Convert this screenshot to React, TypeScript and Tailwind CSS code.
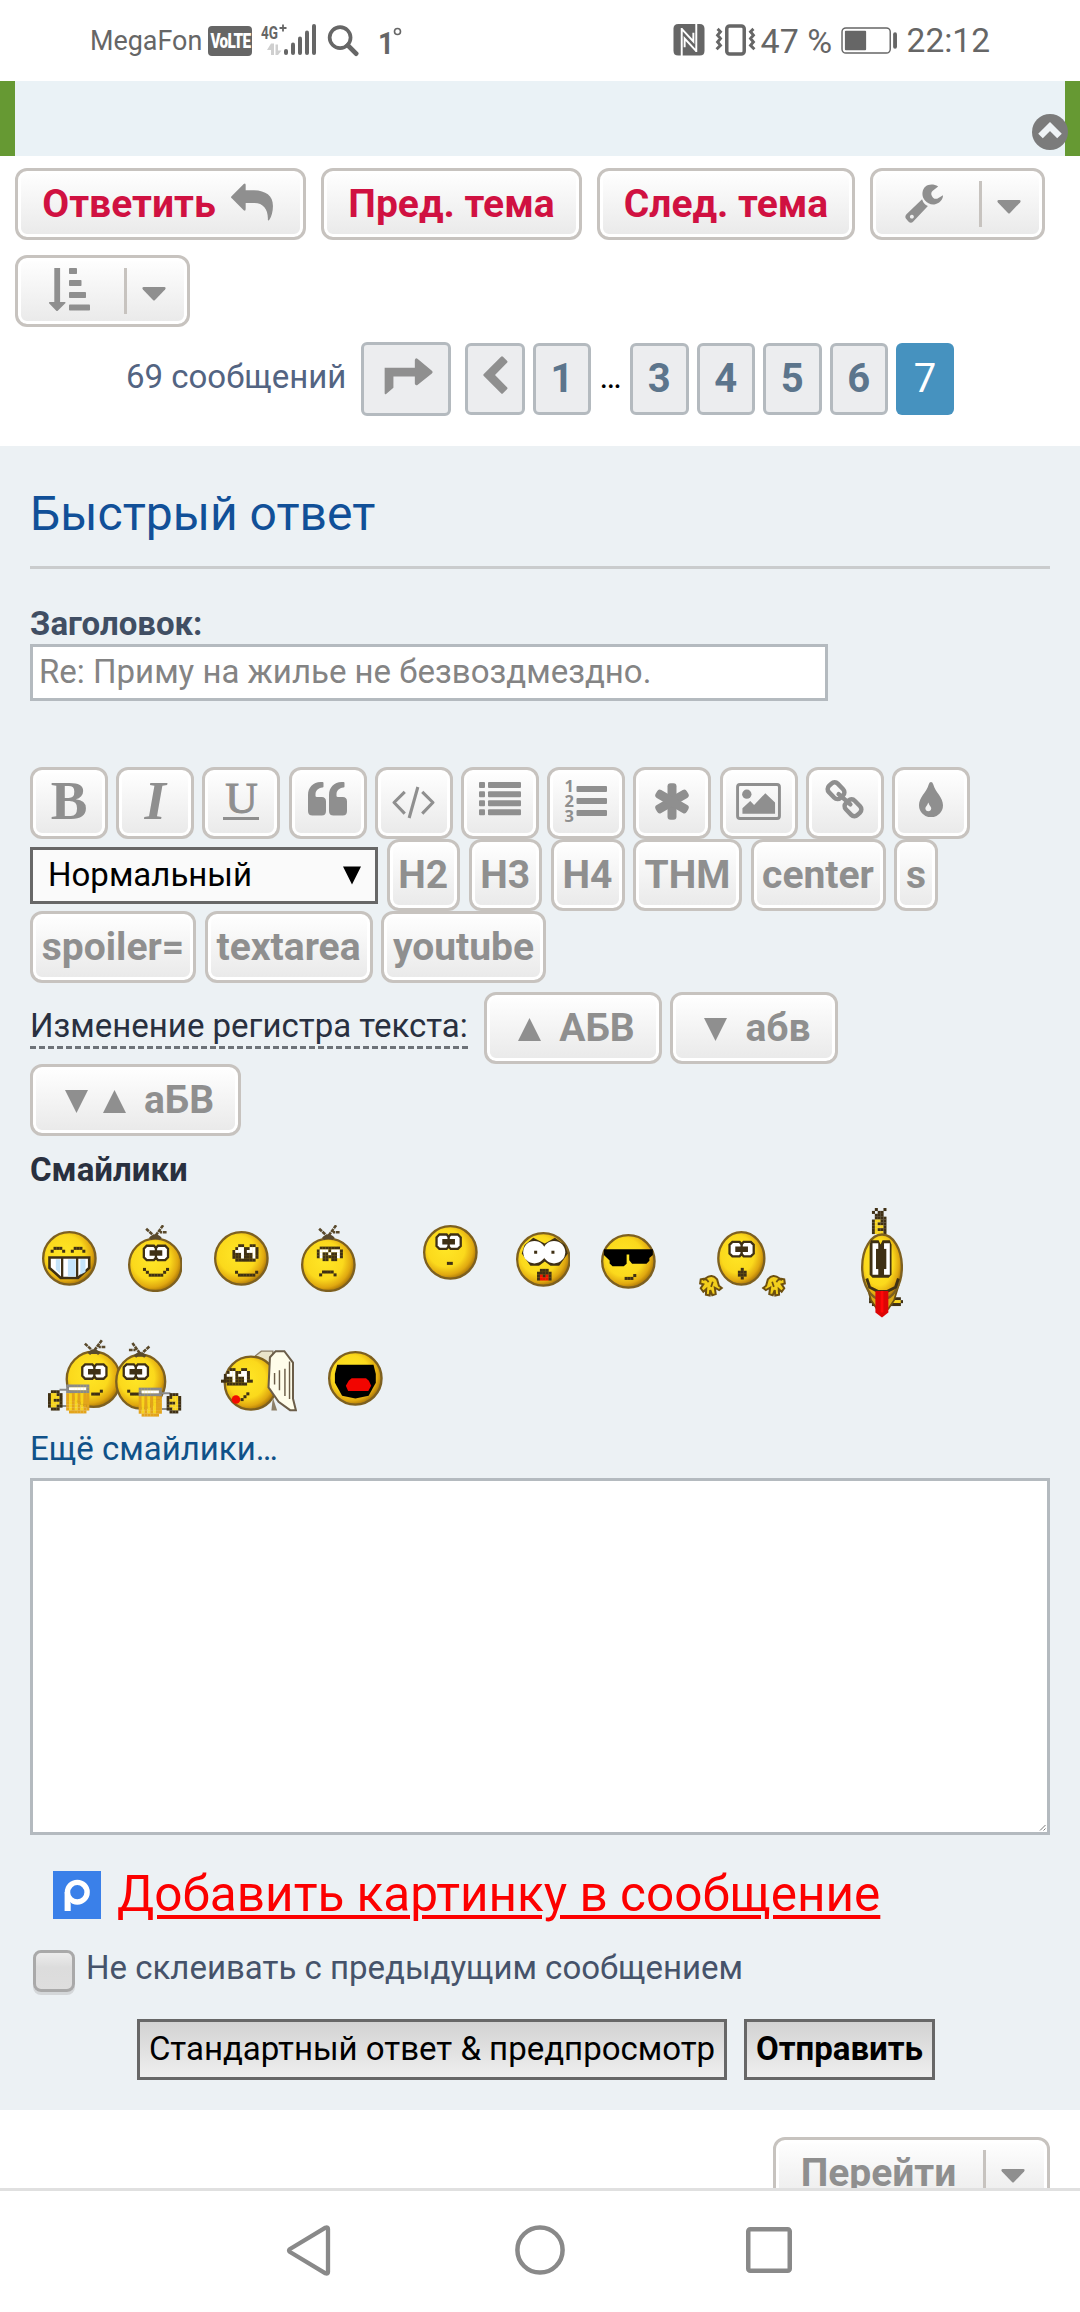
import React from 'react';
import clsx from 'clsx';

const GREY = '#8f8f8f';

/* ---------- buttons ---------- */

const Button: React.FC<{ className?: string; children: React.ReactNode }> = ({ className, children }) => (
  <button
    type="button"
    className={clsx(
      'flex h-[72px] shrink-0 items-center justify-center rounded-[12px] border-[3px] border-[#c7c3bf] bg-linear-to-b from-white to-[#e9e9e9] text-[39px] leading-none font-bold whitespace-nowrap shadow-[inset_0_0_0_3px_#ffffff]',
      className,
    )}
  >
    {children}
  </button>
);

const Caret: React.FC = () => (
  <svg className="mt-[6px]" width="24" height="14" viewBox="0 0 24 14">
    <path d="M1.5 0h21q2 .6.6 2.400L13 13q-1 1-2 0L.9 2.400Q-.5.6 1.500 0z" fill={GREY} />
  </svg>
);

const PageLink: React.FC<{ className?: string; children: React.ReactNode }> = ({ className, children }) => (
  <a
    className={clsx(
      'flex items-center justify-center rounded-[6px] border-[3px] border-[#b4babf] bg-[#ecedef] text-[40px] leading-none font-bold text-[#5c758c]',
      className,
    )}
  >
    {children}
  </a>
);

/* ---------- icons ---------- */

const ReplyIcon = () => (
  <svg className="mb-[5px]" width="42" height="38" viewBox="0 0 43 39" fill={GREY}>
    <path d="M1 13L13 1q2-1.500 2 1v5.500h7c13 0 21 5 21 16 0 6-1.500 10.500-3.500 14-1 1.500-2 1-1.700-.5C38 27 33 20.500 24 20.500h-9v6q0 3-2 1.500L1 16q-2-1.500 0-3z" />
  </svg>
);

const WrenchIcon = () => (
  <svg width="39" height="40" viewBox="0 0 40 41" fill={GREY}>
    <path d="M34 2.500C27 -1.500 19 1 18 8.500c-.5 3.500.5 6 2.500 8.500s6 4.500 9.500 4c5-1 9-4.500 9-9.500l-6 3.500q-4 1-5.500-3-1.500-3 1-5z" />
    <path d="M17.500 15.500q1.500 5 6 7L8.500 38.500q-2.500 2.500-5 0L1.300 36q-2-2.500.2-5zM7 31.500a2 2 0 1 0 .1 0z" fillRule="evenodd" />
  </svg>
);

const SortIcon = () => (
  <svg className="mb-[3px]" width="41" height="43" viewBox="0 0 41 43" fill={GREY}>
    <path d="M5.300 0h5.800v34H16q1 .5 0 1.500l-7 7q-1 1-2 0L.3 35.500q-1-1 .3-1.500h4.700z" />
    <rect x="20" width="8" height="6" rx=".8" />
    <rect x="20" y="12" width="12.500" height="6" rx=".8" />
    <rect x="20" y="24" width="17" height="6" rx=".8" />
    <rect x="20" y="36.500" width="21" height="6" rx=".8" />
  </svg>
);

const JumpIcon = () => (
  <svg className="mb-[5px] ml-[5px]" width="50" height="37" viewBox="0 0 50 38" fill={GREY}>
    <path d="M0 10h31V2q.8-3 3-1l14.500 12q1.500 1.500 0 3L34 27.500q-2 1.500-3-1V19H9v11.500L1.500 37Q0 38 0 36z" />
  </svg>
);

const PrevIcon = () => (
  <svg className="mb-[8px]" width="25" height="38" viewBox="0 0 25 38" fill={GREY}>
    <path d="M18 .8q1-1 2 0l4 4q1 1 0 2L12 19l12 12.300q1 1 0 2l-4 4q-1 1-2 0L.8 20q-1-1 0-2z" />
  </svg>
);

const UpIcon = () => (
  <svg width="36" height="36" viewBox="0 0 36 36">
    <circle cx="18" cy="18" r="18" fill="#7b7b7b" />
    <path d="M8.500 22L18 12.500l9.500 9.500" fill="none" stroke="#eff3f6" strokeWidth="6.500" strokeLinejoin="miter" />
  </svg>
);

const QUOTE_MARK =
  'M12.700 0H14.500q1 0 1 1v3.500q0 1-1 1C10 6 7.500 8.500 7.500 12.500V14q0 1 1.500 1h4.700q4.300 0 4.300 4.500V29q0 4.500-4.300 4.500H4.500Q0 33.500 0 29V13C0 5.500 5 .3 12.700 0z';

const QuoteIcon = () => (
  <svg className="mb-[8px]" width="39" height="34" viewBox="0 0 39 34" fill={GREY}>
    <path d={QUOTE_MARK} />
    <path d={QUOTE_MARK} transform="translate(21 0)" />
  </svg>
);

const CodeIcon = () => (
  <svg className="mb-[1px]" width="43" height="33" viewBox="0 0 44 34" fill="none" stroke={GREY} strokeWidth="3.200" strokeLinejoin="round">
    <path d="M13 6L2 17l11 11.500M31 6l11 11-11 11.500M26.500 1l-9 32" />
  </svg>
);

const ListIcon = () => (
  <svg className="mb-[8px]" width="42" height="34" viewBox="0 0 42 34" fill={GREY}>
    {[0, 9.3, 18.300, 27.300].map((y) => (
      <g key={y}>
        <rect y={y} width="6" height="6" rx="1" />
        <rect x="9" y={y} width="33" height="6" rx="1" />
      </g>
    ))}
  </svg>
);

const NumberedListIcon = () => (
  <svg className="mb-[4px] overflow-visible" width="42" height="42" viewBox="0 0 42 42" fill={GREY}>
    {[0, 1, 2].map((i) => (
      <g key={i}>
        <rect x="11.500" y={6 + i * 12} width="30.500" height="6" rx="1" />
        <text x="-.5" y={12 + i * 15} fontSize="16.500" fontWeight="700" fontFamily="Noto Sans, sans-serif">{i + 1}</text>
      </g>
    ))}
  </svg>
);

const AsteriskIcon = () => (
  <svg className="mb-[4px]" width="36" height="37" viewBox="-18 -18.500 36 37" fill={GREY}>
    <rect x="-4.500" y="-18.300" width="9" height="36.600" rx="3" />
    <rect x="-4.500" y="-18" width="9" height="36" rx="3" transform="rotate(60)" />
    <rect x="-4.500" y="-18" width="9" height="36" rx="3" transform="rotate(-60)" />
  </svg>
);

const ImageIcon = () => (
  <svg className="mb-[4px]" width="45" height="37" viewBox="0 0 46 38" fill={GREY}>
    <rect x="1.500" y="1.500" width="43" height="35" rx="2.500" fill="none" stroke={GREY} strokeWidth="3" />
    <circle cx="11" cy="11.500" r="4.800" />
    <path d="M6.500 31.500V26l8-7.500 4 4L30 10.500l10 9.500v11.500z" />
  </svg>
);

const LinkIcon = () => (
  <svg className="mb-[8px]" width="39" height="40" viewBox="0 0 40 41" fill="none" stroke={GREY} strokeWidth="4.600">
    <rect x="-8.500" y="-6.300" width="17" height="12.600" rx="4.500" transform="translate(11.300 12) rotate(46)" />
    <rect x="-8.500" y="-6.300" width="17" height="12.600" rx="4.500" transform="translate(28.700 29.500) rotate(46)" />
    <path d="M14 15.500L26 26" strokeLinecap="round" />
  </svg>
);

const DropIcon = () => (
  <svg className="mb-[8px]" width="24" height="35" viewBox="0 0 24 35" fill={GREY}>
    <path
      d="M12 0q1.500 0 2.200 2.200C16.500 10.500 24 15 24 23.300A11.800 11.800 0 0 1 0 23.300C0 15 7.500 10.500 9.800 2.200Q10.500 0 12 0zM9.300 20.500q-.8 2.400-2.500 4.400c-1.200 2.300.3 4.400 2.500 4.400s3.700-2.100 2.500-4.400q-1.700-2-2.500-4.400z"
      fillRule="evenodd"
    />
  </svg>
);

const Triangle: React.FC<{ down?: boolean }> = ({ down }) => (
  <svg className="mt-[3px] shrink-0" width="23" height="23" viewBox="0 0 23 23">
    <path d={down ? 'M0 0h23L11.500 23z' : 'M0 23h23L11.500 0z'} fill={GREY} />
  </svg>
);

/* ---------- smileys, drawn on their own small pixel grid ---------- */

const INK: Record<string, string> = { k: '#3f3014', w: '#ffffff', r: '#ee1100', b: '#c5e4fa', y: '#f8d41c', g: '#8a8a8a', a: '#e3a41c' };

const Dots: React.FC<{ x: number; y: number; rows: string[] }> = ({ x, y, rows }) => (
  <g transform={`translate(${x} ${y})`}>
    {rows.flatMap((row, j) =>
      [...row].map((c, i) => (INK[c] ? <rect key={`${i}-${j}`} x={i} y={j} width="1.05" height="1.05" fill={INK[c]} /> : null)),
    )}
  </g>
);

// a pair of square goggle eyes, 9 x 6 dots
const Eyes: React.FC<{ x: number; y: number }> = ({ x, y }) => (
  <g transform={`translate(${x} ${y})`}>
    <path d="M1.300 .5h2.500l.7.8.7-.8h2.500l1 1v3l-1 1H5.200l-.7-.8-.7.8H1.300l-1-1v-3z" fill="#fff" stroke={INK.k} strokeWidth=".8" />
    <path d="M2.300 2.100h4.400v1.900H2.300zM4.100 1h.8v4h-.8z" fill={INK.k} />
  </g>
);

const SIDE_EYES = ['..kk..kk.', '.kwwkkwwk', 'kwwwkwwwk', 'kkkwkkkwk', 'kkkwkkkwk', '.kkkkkkk.'];
const SAD_EYES = ['.kkkkkkk.', 'kwwwkwwwk', 'kwkkwkkwk', 'kwkkkkkwk', '..kk.kk..'];
const MUG = ['gggggggg', 'gwwwwwwg', 'gggggggg', 'ayayayaa', 'ayayayaa', 'ayayayaa', 'ayayayaa', 'ayayayaa', 'ayayayaa', '.aaaaaa.'];

const Hair: React.FC<{ x: number; y?: number; flip?: boolean }> = ({ x, y = 0, flip }) => (
  <g transform={`translate(${x} ${y}) scale(${flip ? -1 : 1} 1)`} stroke="#5a4a2c" fill="none">
    <path d="M-3.200 -3L-.8 -.8M2.700 -4.200L0 -.5M3.900 -1.800H1.600" strokeWidth=".9" strokeDasharray="1.3 .25" />
    <path d="M-1.800 .6Q0 -1.600 1.800 .6" strokeWidth="1.100" fill="#5a4a2c" />
  </g>
);

const Face: React.FC<{ cx?: number; cy?: number; rx?: number; ry?: number }> = ({ cx = 9.5, cy = 9.5, rx = 9.1, ry = 9.1 }) => (
  <ellipse cx={cx} cy={cy} rx={rx} ry={ry} fill="url(#face)" stroke="#7d6020" strokeWidth=".8" />
);

const Smiley: React.FC<{ w: number; h: number; className?: string; top?: number; children: React.ReactNode }> = ({ w, h, className, top = 0, children }) => (
  <svg width={w * 2.88} height={h * 2.88} viewBox={`0 ${-top} ${w} ${h}`} className={clsx('shrink-0', className)}>
    {children}
  </svg>
);

const FaceGradient = () => (
  <svg width="0" height="0" className="absolute">
    <defs>
      <radialGradient id="face" cx=".42" cy=".42" r=".6">
        <stop offset="0" stopColor="#ffe626" />
        <stop offset=".6" stopColor="#fbd91c" />
        <stop offset=".85" stopColor="#e0a810" />
        <stop offset="1" stopColor="#a87408" />
      </radialGradient>
    </defs>
  </svg>
);

const Hand: React.FC<{ x: number; flip?: boolean }> = ({ x, flip }) => (
  <g transform={`translate(${x} 15) scale(${flip ? -1 : 1} 1)`} fill="#f3cf1c" stroke="#6d5010" strokeWidth=".7">
    <path d="M2.200 1.500Q4.500 -.4 6.300 1.800L6.900 4l1 .8-.9.7-1.500-.8.3 2.200-1.200.4-.7-1.800-.2 1.900-1.300-.3.1-1.900-1 .9-.9-1.200L1.500 3.500.4 3.200.6 1.800z" />
    <path d="M1.300 2q1.500-.6 2 .8M4.800 2.600l-.6 1.800" fill="none" strokeWidth=".6" />
  </g>
);

const SmileyRows = () => (
  <>
    <FaceGradient />
    <div className="flex h-[113px] shrink-0 items-start">
      <Smiley w={19} h={19} className="mt-[23px] ml-[12px]">
        <Face />
        <Dots x={3} y={5.500} rows={['.kkk....kkk.', 'k...k..k...k']} />
        <path d="M2.600 9.200h13.800v3.600L12.500 16.300h-6L2.600 12.800z" fill="#fff" stroke={INK.k} strokeWidth=".9" />
        <path d="M9 9.800h2.700v6H9zM13.300 9.800h1.800v4.400l-1.800 1zM4.800 9.800h1.500v5l-1.500-1.400z" fill={INK.b} />
        <path d="M7 9v7.300M12.200 9v7.300" stroke={INK.k} strokeWidth=".8" />
      </Smiley>
      <Smiley w={19} h={23.300} top={4.300} className="mt-[17px] ml-[31px]">
        <Face />
        <Hair x={9.500} />
        <Eyes x={5.200} y={2.400} />
        <Dots x={5.200} y={10.600} rows={['k.......k', '.k.....k.', '..kkkkk..']} />
      </Smiley>
      <Smiley w={19} h={19} className="mt-[23px] ml-[32px]">
        <Face />
        <Dots x={6.400} y={4.600} rows={SIDE_EYES} />
        <Dots x={7.300} y={13.800} rows={['k......k', '.kkkkkk.']} />
      </Smiley>
      <Smiley w={19} h={23.300} top={4.300} className="mt-[17px] ml-[32px]">
        <Face />
        <Hair x={9.500} />
        <Dots x={5.500} y={3.200} rows={SAD_EYES} />
        <Dots x={6.300} y={11.500} rows={['.kkkk.', 'k....k']} />
      </Smiley>
      <Smiley w={19} h={19} className="mt-[17px] ml-[67px]">
        <Face />
        <Eyes x={4.400} y={2.800} />
        <Dots x={8.300} y={12.800} rows={['kk']} />
      </Smiley>
      <Smiley w={19} h={19} className="mt-[24px] ml-[38px]">
        <Face />
        <path d="M3 4.500L6 2l4 2 3.500-2L17 4.500l1 3-3 4.200h-3l-2-1.500-2 1.500H5L2 7.500z" fill={INK.k} />
        <circle cx="6.400" cy="7" r="3.900" fill="#fff" />
        <circle cx="13.200" cy="7" r="3.900" fill="#fff" />
        <Dots x={6.300} y={6.500} rows={['k.....k']} />
        <Dots x={7.300} y={12.800} rows={['.kkk.', 'kkkkk', 'krkrk', 'krrrk']} />
      </Smiley>
      <Smiley w={19} h={19} className="mt-[26px] ml-[31px]">
        <Face />
        <path d="M1 5.300h17v2l-1.200 1v1l-1 1H10.800l-1-1.200v-2h-.9v3.200l-1 .9H4l-1-1v-1L1 7.300z" fill="#000" />
        <Dots x={8.200} y={13.900} rows={['...k', 'kkk.']} />
      </Smiley>
      <Smiley w={30.400} h={23} className="mt-[23px] ml-[43px]">
        <Face cx={14.700} cy={9.500} rx={8} ry={9.100} />
        <Hand x={0} />
        <Hand x={30.200} flip />
        <Eyes x={10.300} y={3.300} />
        <Dots x={13.500} y={12.800} rows={['.k.', 'kkk', 'kkk', '.k.']} />
      </Smiley>
      <Smiley w={14.800} h={38.200} className="ml-[74px]">
        <Dots x={3.800} y={0} rows={['.k..k', 'k.kk.', '.kkk.', '.kkkk', 'kyykk', 'kykkk', 'kyyyk', 'kykkk', 'kyyyk']} />
        <Dots x={2.800} y={31} rows={['kyy....kkkk.', 'kyy...kkyyyk', '.ky....kkkk.']} />
        <path d="M2 27l1.500 5 2 3h4l2-3L13 27z" fill="#d9a815" stroke="#6d5010" strokeWidth=".6" />
        <Face cx={7.300} cy={20.500} rx={6.900} ry={11.300} />
        <path d="M3.500 11.200h2.600l.7 1.500.7-1.500H10l.6 1.500v10.500l-1 1H4l-1-1V12.700z" fill={INK.k} />
        <path d="M4 12.200h2v11H4zM8 12.200h2v11H8z" fill="#fff" />
        <path d="M5.200 14.200h3.600v7H5.200z" fill={INK.k} />
        <path d="M2 24.500l1 3 3 1.500h3l3-1.500 1-3" stroke={INK.k} fill="none" />
        <path d="M5 28.800h4.500v7.500L7.300 38 5 36.300z" fill="#dd0505" />
        <path d="M6.800 28.800h1v7.500h-1z" fill="#ff0808" />
      </Smiley>
    </div>
    <div className="mt-[18px] flex h-[81px] shrink-0 items-start">
      <Smiley w={46.500} h={27.500} top={4.300} className="ml-[18px]">
        <Face cx={15.800} cy={9.700} rx={9.300} ry={9.600} />
        <Face cx={32.200} cy={10.500} rx={8.500} ry={9.400} />
        <Hair x={16} y={.3} />
        <Hair x={32} y={1.300} flip />
        <Eyes x={11.600} y={4} />
        <Eyes x={26} y={4} />
        <Dots x={15} y={13.300} rows={['...k', 'kkk.']} />
        <Dots x={27.500} y={13.300} rows={['k....', '.kkkk']} />
        <path d="M4 13.300h3M4 19h3M39.500 14.500h3M39.500 20h3" stroke={INK.g} strokeWidth=".7" />
        <Dots x={0} y={13.500} rows={['.kkk.', 'kyykk', 'kyyyk', 'kykkk', 'kyyyk', 'kyykk', '.kkk.']} />
        <Dots x={41.200} y={14.500} rows={['.kkk.', 'kkyyk', 'kyyyk', 'kkkyk', 'kyyyk', 'kkyyk', '.kkk.']} />
        <Dots x={6.300} y={11.500} rows={MUG} />
        <Dots x={31.500} y={12.600} rows={MUG} />
      </Smiley>
      <Smiley w={26.500} h={21.500} className="mt-[11px] ml-[39px]">
        <path d="M12 2l2-1.600h4v5h-6z" fill="#e9e4cb" stroke="#8d8069" strokeWidth=".5" />
        <Face cx={10.400} cy={11.500} rx={9.100} ry={9.200} />
        <path d="M17 2.500L19 .4h3l3 4v12.500l1 4h-2L20 18l-3.500-5z" fill="#fffdea" stroke="#6b5d48" strokeWidth=".7" />
        <path d="M18.600 8v4M20.300 7v7M22.200 6.500v9.500M23.800 4v13" stroke="#6b5d48" strokeWidth=".5" />
        <path d="M18 16.500l1.500 4.500h-2z" fill="#8d8069" />
        <Dots x={0} y={10.300} rows={['k.........k']} />
        <Dots x={1} y={6.300} rows={SIDE_EYES} />
        <Dots x={6.800} y={14.700} rows={['..k', '.k.', 'k..']} />
        <circle cx="5.200" cy="17.200" r="1.500" fill="#f20d00" />
      </Smiley>
      <Smiley w={19} h={19} className="mt-[12px] ml-[31px]">
        <Face />
        <path d="M3.200 4.800h12.600l.8 3.200v3l-2.500 4.500-4.600 1-4.600-1L2.400 11V8z" fill="#000" />
        <path d="M7.200 10.300l1-.8h5l1 .8.8 1.800-1 1.800H7l-.8-1.800z" fill="#f20500" />
      </Smiley>
    </div>
  </>
);

/* ---------- system bars ---------- */

const StatusBar = () => (
  <div className="flex h-[81px] items-start bg-white pt-[24px] text-[#666666]">
    <span className="mt-[1px] ml-[90px] w-[118px] text-[26.900px] leading-[32px]">MegaFon</span>
    <span className="mt-[2px] flex h-[30px] w-[44px] items-center justify-center rounded-[4px] bg-[#666666] text-[18px] leading-[24px] font-black text-white">
      <span className="scale-x-85 scale-y-110 tracking-[-0.8px]">VoLTE</span>
    </span>
    <svg className="ml-[9px] overflow-visible" width="56" height="33" viewBox="0 0 56 33" fill="#666666">
      <text x="0" y="14.500" fontSize="18.500" fontWeight="700" textLength="17" lengthAdjust="spacingAndGlyphs">4G</text>
      <path d="M18.500 4h7M22 .5v7" stroke="#666666" strokeWidth="1.800" />
      <path d="M6 26l4-6.500h3V31h-3v-5zM14.500 20.500H17v6h3.500L17 31h-2.500z" fill="#cfcfcf" />
      <rect x="23" y="25" width="4" height="6" rx="2" />
      <rect x="30" y="18.500" width="4" height="12.500" rx="2" />
      <rect x="37" y="12.500" width="4" height="18.500" rx="2" />
      <rect x="44" y="6.500" width="4" height="24.500" rx="2" />
      <rect x="51" y="0" width="4" height="31" rx="2" />
    </svg>
    <svg className="mt-px ml-[10px]" width="33" height="32" viewBox="0 0 33 33" fill="none" stroke="#666666">
      <circle cx="13" cy="13" r="10.800" strokeWidth="3.800" />
      <path d="M21 21l8.500 8.500" strokeWidth="5" strokeLinecap="round" />
    </svg>
    <span className="mt-[4px] ml-[18px] w-[15px] text-[31px] leading-[32px] font-bold">
      <span className="inline-block origin-left scale-x-90">1</span>
    </span>
    <svg className="mt-[3px]" width="9" height="9" viewBox="0 0 9 9">
      <circle cx="4.500" cy="4.500" r="3" fill="none" stroke="#666666" strokeWidth="1.600" />
    </svg>

    <div className="mr-[90px] ml-auto flex items-start">
      <svg width="32" height="32" viewBox="0 0 32 33">
        <path d="M5 0h22q5 0 5 5v22.500q0 5-5 5H5q-5 0-5-5V5q0-5 5-5z" fill="#666666" />
        <path d="M8.500 33V4M23.500 0v29M8.500 5l12 13V9M23.500 28l-12-13v9" fill="none" stroke="#fff" strokeWidth="2" />
      </svg>
      <svg className="ml-[10px]" width="41" height="32" viewBox="0 0 41 33" fill="none" stroke="#666666">
        <rect x="11.500" y="2" width="18" height="29" rx="3" strokeWidth="3.600" />
        <path d="M2 5l3 3-3 3.500 3 3.500-3 3.500 3 3.500-4 4M39 5l-3 3 3 3.500-3 3.500 3 3.500-3 3.500 4 4" strokeWidth="3" />
      </svg>
      <span className="ml-[5px] w-[79px] text-[34px] leading-[34px] whitespace-nowrap">47 %</span>
      <svg className="mt-[3px]" width="59" height="27" viewBox="0 0 59 28">
        <rect x="1" y="1" width="50" height="26" rx="4" fill="none" stroke="#666666" strokeWidth="1.500" />
        <rect x="4" y="4" width="22" height="20" rx="1" fill="#666666" />
        <rect x="54" y="5.500" width="4" height="17" rx="2" fill="#666666" />
      </svg>
      <span className="ml-[8px] text-[33.500px] leading-[34px]">22:12</span>
    </div>
  </div>
);

const NavBar = () => (
  <div className="flex h-[124px] items-start border-t-[3px] border-[#e0e0e0] bg-white">
    <svg className="mt-[34px] ml-[286px]" width="45" height="51" viewBox="0 0 45 52" preserveAspectRatio="none" fill="none" stroke="#898989" strokeWidth="4.300" strokeLinejoin="round">
      <path d="M39.500 2.700q2.500-1 2.500 1.500v43.600q0 2.500-2.500 1.500L4 27.500q-2-1.500 0-3z" />
    </svg>
    <svg className="mt-[34px] ml-[184px]" width="50" height="50" viewBox="0 0 50 50" fill="none" stroke="#898989" strokeWidth="4.500">
      <circle cx="25" cy="25" r="22.600" />
    </svg>
    <svg className="mt-[36px] ml-[181px]" width="46" height="46" viewBox="0 0 46 46" fill="none" stroke="#898989" strokeWidth="4.500">
      <rect x="2.250" y="2.250" width="41.500" height="41.500" rx="2" />
    </svg>
  </div>
);

/* ---------- page ---------- */

const FORMAT_BUTTONS: { key: string; icon: React.ReactNode }[] = [
  { key: 'bold', icon: <span className="mb-[5px] font-['Liberation_Serif',serif] text-[55px]">B</span> },
  { key: 'italic', icon: <span className="mb-[5px] font-['Liberation_Serif',serif] text-[55px] italic">I</span> },
  {
    key: 'underline',
    icon: (
      <span className="mb-[4px] flex h-[37px] w-[36px] flex-col items-center border-b-[3px] border-[#8f8f8f] font-['Liberation_Serif',serif] text-[45px] leading-[30px] font-medium">
        <span className="[-webkit-text-stroke:1px_#8f8f8f]">U</span>
      </span>
    ),
  },
  { key: 'quote', icon: <QuoteIcon /> },
  { key: 'code', icon: <CodeIcon /> },
  { key: 'list', icon: <ListIcon /> },
  { key: 'numbered', icon: <NumberedListIcon /> },
  { key: 'item', icon: <AsteriskIcon /> },
  { key: 'image', icon: <ImageIcon /> },
  { key: 'link', icon: <LinkIcon /> },
  { key: 'color', icon: <DropIcon /> },
];

const TopicActions = () => (
  <div className="h-[290px] bg-white px-[15px] pt-[12px]">
    <div className="flex gap-[15px] text-[#d01141]">
      <Button className="w-[291px] gap-[15px] pr-[6px]">
        Ответить
        <ReplyIcon />
      </Button>
      <Button className="w-[261px]">Пред. тема</Button>
      <Button className="w-[258px]">След. тема</Button>
      <Button className="w-[175px] pl-[11px]">
        <WrenchIcon />
        <span className="mr-[15px] ml-[35px] h-[46px] w-[3px] bg-[#c7c3bf]" />
        <Caret />
      </Button>
    </div>
    <div className="mt-[15px] flex">
      <Button className="w-[175px] pl-[10px]">
        <SortIcon />
        <span className="mr-[15px] ml-[34px] h-[46px] w-[3px] bg-[#c7c3bf]" />
        <Caret />
      </Button>
    </div>
    <div className="mt-[15px] flex items-start pl-[111px]">
      <span className="w-[235px] text-[33px] leading-[70px] whitespace-nowrap text-[#536482]">69 сообщений</span>
      <PageLink className="h-[74px] w-[90px]">
        <JumpIcon />
      </PageLink>
      <div className="mt-px ml-[14px] flex gap-[8px]">
        <PageLink className="h-[72px] w-[60px]">
          <PrevIcon />
        </PageLink>
        <PageLink className="h-[72px] w-[58px]">1</PageLink>
        <span className="w-[23px] text-center text-[33px] leading-[67px] text-black">…</span>
        {['3', '4', '5', '6'].map((page) => (
          <PageLink key={page} className="h-[72px] w-[58.500px]">{page}</PageLink>
        ))}
        <span className="flex h-[72px] w-[58px] items-center justify-center rounded-[6px] bg-[#4692bf] text-[40px] leading-none text-white">7</span>
      </div>
    </div>
  </div>
);

const QuickReply = () => (
  <div className="flex h-[1664px] flex-col bg-[#ecf1f4] px-[30px] pt-[34px] text-[33px]">
    <h2 className="h-[89px] shrink-0 border-b-[3px] border-[#cacccd] text-[48px] leading-[67px] text-[#115098]">Быстрый ответ</h2>
    <label className="mt-[36px] h-[39px] shrink-0 leading-[37px] font-bold text-[#404e63]">Заголовок:</label>
    <div className="h-[57px] w-[798px] shrink-0 border-[3px] border-[#b4babf] bg-white pl-[6px] leading-[49px] whitespace-nowrap text-[#848484]">
      Re: Приму на жилье не безвоздмездно.
    </div>

    <div className="mt-[66px] flex gap-[8.200px] text-[#8f8f8f]">
      {FORMAT_BUTTONS.map(({ key, icon }) => (
        <Button key={key} className="w-[78px]">{icon}</Button>
      ))}
    </div>
    <div className="flex items-center gap-[8.500px] text-[#8f8f8f]">
      <div className="flex h-[57px] w-[348px] items-center justify-between border-[3px] border-[#676767] bg-[#fafafa] pr-[13px] pl-[15px] text-black">
        Нормальный
        <svg width="20" height="19" viewBox="0 0 20 19">
          <path d="M1 .5h18l-9 18z" />
        </svg>
      </div>
      <Button className="w-[73.500px]">H2</Button>
      <Button className="w-[73.500px]">H3</Button>
      <Button className="w-[74px]">H4</Button>
      <Button className="w-[109px]">THM</Button>
      <Button className="w-[135px]">center</Button>
      <Button className="w-[44px]">s</Button>
    </div>
    <div className="flex gap-[8.500px] text-[#8f8f8f]">
      <Button className="w-[166px]">spoiler=</Button>
      <Button className="w-[168px]">textarea</Button>
      <Button className="w-[165px]">youtube</Button>
    </div>
    <div className="mt-[9px] flex items-start text-[#8f8f8f]">
      <span className="mt-[10px] h-[47px] w-[438px] border-b-[3px] border-dashed border-[#6d7278] leading-[47px] whitespace-nowrap text-[#29303f]">
        Изменение регистра текста:
      </span>
      <Button className="ml-[16px] w-[178px] gap-[18px] pl-[7px]">
        <Triangle />
        АБВ
      </Button>
      <Button className="ml-[8px] w-[168px] gap-[18px] pl-[7px]">
        <Triangle down />
        абв
      </Button>
    </div>
    <div className="flex text-[#8f8f8f]">
      <Button className="w-[211px] gap-[18px] pl-[8px]">
        <span className="flex gap-[15px]">
          <Triangle down />
          <Triangle />
        </span>
        аБВ
      </Button>
    </div>
    <strong className="mt-[14px] h-[58px] shrink-0 leading-[39px] text-[#29303f]">Смайлики</strong>

    <SmileyRows />

    <a className="mt-[7px] h-[51px] shrink-0 leading-[44px] text-[#105289]">Ещё смайлики…</a>
    <div className="flex h-[357px] shrink-0 items-end justify-end border-[3px] border-[#b4babf] bg-white">
      <svg width="8" height="8" viewBox="0 0 8 8" stroke="#777777" strokeWidth="1">
        <path d="M1 6.500L6.500 1M4.500 6.500l2-2" />
      </svg>
    </div>

    <div className="mt-[36px] ml-[23px] flex h-[48px] shrink-0 items-center">
      <svg width="48" height="48" viewBox="0 0 48 48">
        <path d="M0 0h48v48H0z" fill="#3a80e9" />
        <circle cx="24.300" cy="21.200" r="9.800" fill="none" stroke="#fff" strokeWidth="5.400" />
        <path d="M11.600 21h5.400v10.500l.7 1V40h-6.100z" fill="#fff" />
      </svg>
      <a className="mb-[2px] ml-[16px] text-[49.500px] leading-[48px] whitespace-nowrap text-[#fc0000] underline decoration-[4px] underline-offset-[4px]">
        Добавить картинку в сообщение
      </a>
    </div>
    <label className="mt-[31px] flex h-[43px] shrink-0 items-start text-[#46536a]">
      <span className="ml-[3px] h-[42px] w-[42px] shrink-0 rounded-[8px] border-[3px] border-[#a9a9a9] bg-linear-to-b from-[#ececec] via-[#dcdcdc] via-40% to-[#dedede] shadow-[0_3px_0_#d4d7d9]" />
      <span className="ml-[11px] leading-[35px] whitespace-nowrap">Не склеивать с предыдущим сообщением</span>
    </label>
    <div className="mt-[26px] ml-[107px] flex gap-[17px] leading-[40px] text-black">
      <button className="h-[61px] w-[590px] border-[3px] border-[#676767] bg-linear-to-b from-[#d2d2d2] to-[#efefef] pb-[2px] whitespace-nowrap">
        Стандартный ответ &amp; предпросмотр
      </button>
      <button className="h-[61px] w-[191px] border-[3px] border-[#676767] bg-linear-to-b from-[#d2d2d2] to-[#efefef] pb-[2px] font-bold">
        Отправить
      </button>
    </div>
  </div>
);

const App: React.FC = () => (
  <div className="flex h-[2312px] w-[1080px] flex-col overflow-hidden bg-white font-['Roboto',sans-serif]">
    <StatusBar />
    <div className="flex h-[75px] items-end justify-end border-x-[15px] border-[#669933] bg-[#eaf2f6]">
      <div className="relative -right-[3px] mb-[6px]">
        <UpIcon />
      </div>
    </div>
    <TopicActions />
    <QuickReply />
    <div className="flex h-[78px] justify-end overflow-hidden bg-white pt-[27px] pr-[30px]">
      <Button className="w-[277px] pl-[3px] text-[#8f8f8f]">
        Перейти
        <span className="mr-[15px] ml-[27px] h-[46px] w-[3px] bg-[#c7c3bf]" />
        <Caret />
      </Button>
    </div>
    <NavBar />
  </div>
);

export default App;
